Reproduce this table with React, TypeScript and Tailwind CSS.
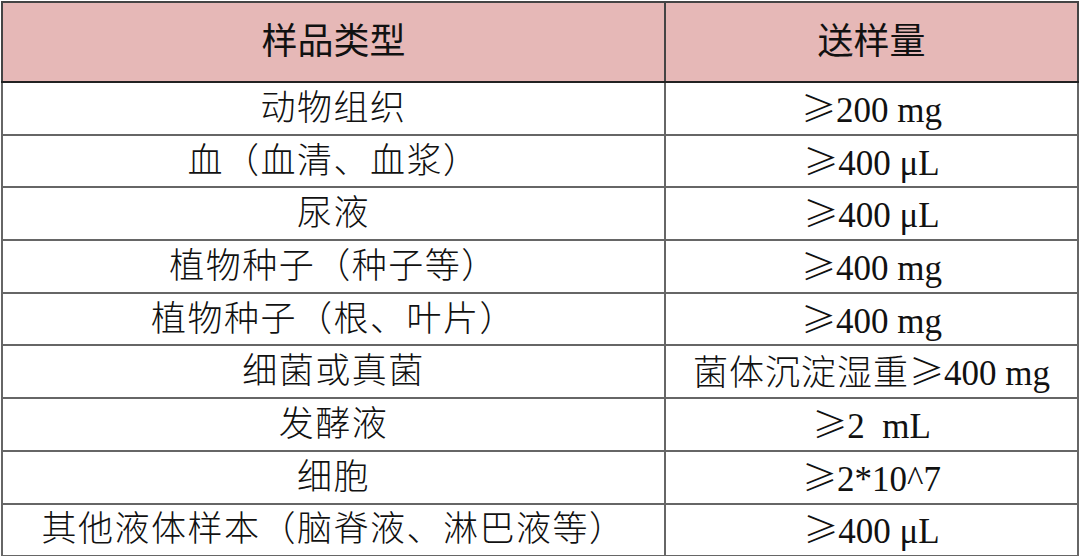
const rows: [string, string][] = [
  ['动物组织', '≥200 mg'],
  ['血（血清、血浆）', '≥400 μL'],
  ['尿液', '≥400 μL'],
  ['植物种子（种子等）', '≥400 mg'],
  ['植物种子（根、叶片）', '≥400 mg'],
  ['细菌或真菌', '菌体沉淀湿重≥400 mg'],
  ['发酵液', '≥2  mL'],
  ['细胞', '≥2*10^7'],
  ['其他液体样本（脑脊液、淋巴液等）', '≥400 μL'],
];

// put the ≥ sign in the CJK face so it gets the full-width glyph
function Amount({ text }: { text: string }) {
  const parts = text.split('≥');
  return (
    <>
      {parts[0] && <span className="tracking-[1px]">{parts[0]}</span>}
      <span className="font-['Noto_Sans_CJK_SC',sans-serif]">≥</span>
      {parts[1]}
    </>
  );
}

export default function App() {
  return (
    <div className="w-[1080px] h-[556px] bg-white pl-[1px] pt-[1px] font-['Liberation_Serif','Noto_Sans_CJK_SC',serif] text-[#111] [text-spacing-trim:space-all]">
      <table className="w-[1078px] border-collapse border-2 border-[#555] table-fixed">
        <colgroup>
          <col className="w-[663px]" />
          <col />
        </colgroup>
        <thead>
          <tr className="h-[80px] bg-[#e6b8b7]">
            <th className="border-2 border-[#444] border-b-[#222] text-[36px] font-normal text-center">样品类型</th>
            <th className="border-2 border-[#444] border-b-[#222] text-[36px] font-normal text-center">送样量</th>
          </tr>
        </thead>
        <tbody>
          {rows.map(([type, amount]) => (
            <tr key={type} className="h-[52.7px]">
              <td className="border-2 border-[#666] text-[35px] font-light tracking-[1.5px] text-center leading-none whitespace-nowrap">
                {type}
              </td>
              <td className="border-2 border-[#666] text-[35px] font-light text-center leading-none whitespace-pre">
                <Amount text={amount} />
              </td>
            </tr>
          ))}
        </tbody>
      </table>
    </div>
  );
}
